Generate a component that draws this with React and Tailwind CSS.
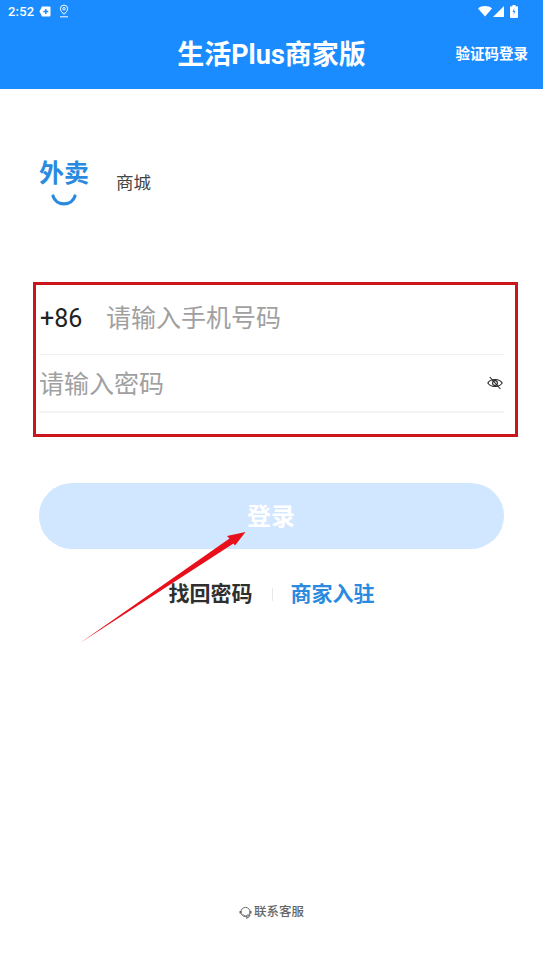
import React from "react";

const cjk = { fontFamily: '"Roboto", "Noto Sans CJK SC", sans-serif' };

const StatusBar = () => (
  <div className="h-[22px] flex items-center justify-between pl-[8px] pr-[25px] text-white">
    <div className="flex items-center">
      <span className="text-[13px] font-medium leading-none tracking-[0.2px]">2:52</span>
      <svg className="ml-[5px]" width="12" height="11" viewBox="0 0 12 11">
        <path d="M3 0.5h7.5a1 1 0 0 1 1 1v8a1 1 0 0 1-1 1H3L0.5 5.5z" fill="#fff" />
        <path d="M6.8 3v5M4.3 5.5h5" stroke="#1a8cff" strokeWidth="1.5" />
      </svg>
      <svg className="ml-[8px]" width="10" height="14" viewBox="0 0 10 14" fill="none" stroke="#fff">
        <path d="M5 10.3C3.4 8.6 1.4 6.8 1.4 4.7a3.6 3.6 0 0 1 7.2 0c0 2.1-2 3.9-3.6 5.6z" strokeWidth="1" />
        <circle cx="5" cy="4.7" r="1.2" strokeWidth="1" />
        <path d="M1 12.8h8" strokeWidth="1" />
      </svg>
    </div>
    <div className="flex items-center">
      <svg width="14" height="11" viewBox="0 0 14 11">
        <path d="M0 2.5C3.8-0.7 10.2-0.7 14 2.5L7 10.5z" fill="#fff" />
      </svg>
      <svg className="ml-[1px]" width="11" height="11" viewBox="0 0 11 11">
        <path d="M11 0v11H0z" fill="#fff" />
      </svg>
      <svg className="ml-[6px]" width="8" height="13" viewBox="0 0 8 13">
        <path d="M2.5 0h3v1.2H7a1 1 0 0 1 1 1V12a1 1 0 0 1-1 1H1a1 1 0 0 1-1-1V2.2a1 1 0 0 1 1-1h1.5z" fill="#fff" />
        <path d="M4.4 3.2L2.6 7h1.3l-.3 3 1.8-3.9H4.2z" fill="#1a8cff" />
      </svg>
    </div>
  </div>
);

const EyeSlash = () => (
  <svg width="16" height="14" viewBox="0 0 16 14" fill="none" stroke="#222" strokeWidth="1.1">
    <path d="M0.8 7C3.8 2.4 12.2 2.4 15.2 7C12.2 11.6 3.8 11.6 0.8 7z" />
    <circle cx="8" cy="7" r="2.4" />
    <path d="M2.8 1l10.6 12" />
  </svg>
);

const Headset = () => (
  <svg width="13" height="13" viewBox="0 0 13 13" fill="none" stroke="#666">
    <circle cx="6.5" cy="6" r="4.6" strokeWidth="1" />
    <path d="M1.5 5v2.6M11.5 5v2.6" strokeWidth="2" />
    <path d="M3.8 8.4c1.4 2 4 2 5.4 0" strokeWidth="1" />
    <path d="M11 8.5c-.4 2-2 3.4-4 3.6" strokeWidth="1.1" />
  </svg>
);

export default function App() {
  return (
    <div className="relative w-[543px] h-[965px] bg-white overflow-hidden" style={cjk}>
      {/* Header */}
      <div className="bg-[#1a8cff] h-[89px] text-white">
        <StatusBar />
        <div className="relative h-[67px] flex items-center justify-center">
          <h1 className="text-[27px] font-bold leading-none">生活Plus商家版</h1>
          <span className="absolute right-[15px] top-[26px] text-[14.5px] font-bold leading-none">验证码登录</span>
        </div>
      </div>

      {/* Logo */}
      <div className="flex items-start pl-[39px] pt-[70px] h-[193px]">
        <div className="w-[50px] flex flex-col items-center">
          <span className="text-[25px] font-bold leading-[30px] text-[#2a8ae0] whitespace-nowrap">外卖</span>
          <svg className="mt-[5px]" width="26" height="13" viewBox="0 0 26 13" fill="none">
            <path d="M2 2C5 12.5 21 12.5 24 2" stroke="#2a8ae0" strokeWidth="3.2" strokeLinecap="round" />
          </svg>
        </div>
        <span className="ml-[27px] mt-[11px] text-[17.5px] leading-[26px] text-[#444]">商城</span>
      </div>

      {/* Form */}
      <div className="px-[39px]">
        <div className="h-[73px] flex items-center border-b border-[#f0f0f0] pl-[1px]">
          <span className="text-[25px] leading-none text-[#222] w-[66px]">+86</span>
          <span className="text-[25px] leading-none text-[#a0a0a0]">请输入手机号码</span>
        </div>
        <div className="h-[58px] flex items-center justify-between border-b-2 border-[#f3f3f3] pr-[1px]">
          <span className="text-[25px] leading-none text-[#a0a0a0] pt-[2px]">请输入密码</span>
          <EyeSlash />
        </div>

        <button className="mt-[70px] w-full h-[66px] rounded-[33px] bg-[#d1e6ff] text-white text-[24px] font-bold flex items-center justify-center">
          <span className="pt-[1px] -ml-[1px]">登录</span>
        </button>

        <div className="mt-[31px] flex items-center justify-center h-[28px]">
          <span className="text-[21px] font-bold leading-none text-[#2f2f2f]">找回密码</span>
          <span className="mx-[19px] w-px h-[13px] bg-[#e8e8e8]"></span>
          <span className="text-[21px] font-bold leading-none text-[#2a8ae0] -ml-[1px]">商家入驻</span>
        </div>
      </div>

      {/* Footer */}
      <div className="absolute bottom-[46px] left-0 w-full flex items-center justify-center gap-[2px] text-[12.5px] font-medium leading-none text-[#666]">
        <Headset />
        <span>联系客服</span>
      </div>

      {/* Red annotation box */}
      <div className="absolute left-[33px] top-[282px] w-[485px] h-[155px] border-[3px] border-[#cb151c] pointer-events-none"></div>

      {/* Red annotation arrow */}
      <svg className="absolute left-[80px] top-[530px] pointer-events-none" width="168" height="115" viewBox="0 0 168 115">
        <path d="M0 113L149.5 8.5L147 6L165.5 2L155 15.5L153.5 13.5z" fill="#e8101a" />
      </svg>
    </div>
  );
}
